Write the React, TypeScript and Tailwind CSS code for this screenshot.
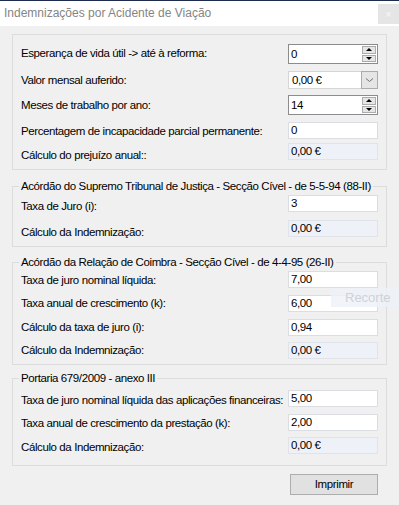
import React from "react";

type Kind = "spin" | "combo" | "text" | "ro";

const Field = ({ kind, value }: { kind: Kind; value: string }) => {
  if (kind === "spin") {
    return (
      <div className="w-[90px] h-[20px] flex border border-[#8c8c8c] bg-white">
        <div className="flex-1 pl-[2px] leading-[18px]">{value}</div>
        <div className="w-[15px] flex flex-col gap-px py-px pr-px">
          <div className="flex-1 bg-[#e6e6e6] border border-[#acacac] flex items-center justify-center">
            <div className="w-0 h-0 border-l-[3px] border-r-[3px] border-b-[3px] border-l-transparent border-r-transparent border-b-black" />
          </div>
          <div className="flex-1 bg-[#e6e6e6] border border-[#acacac] flex items-center justify-center">
            <div className="w-0 h-0 border-l-[3px] border-r-[3px] border-t-[3px] border-l-transparent border-r-transparent border-t-black" />
          </div>
        </div>
      </div>
    );
  }
  if (kind === "combo") {
    return (
      <div className="w-[90px] h-[18px] flex">
        <div className="flex-1 pl-[3px] leading-[16px] bg-white border border-[#d5d5d5] border-r-0">{value}</div>
        <div className="w-[17px] bg-[#e5e5e5] border border-[#acacac] flex items-center justify-center">
          <svg width="9" height="6" viewBox="0 0 9 6">
            <path d="M1 1.5 L4.5 4.5 L8 1.5" fill="none" stroke="#707070" strokeWidth="1" />
          </svg>
        </div>
      </div>
    );
  }
  const cls =
    kind === "ro"
      ? "bg-[#eef2f8] border-[#e0e4ea]"
      : "bg-white border-[#dadde2]";
  return (
    <div className={`w-[90px] h-[17px] border ${cls} pl-[2px] leading-[14px]`}>
      {value}
    </div>
  );
};

const Row = ({
  label,
  kind,
  value,
  mt,
  pt,
}: {
  label: string;
  kind: Kind;
  value: string;
  mt: string;
  pt: string;
}) => (
  <div className={`flex items-start ${mt}`}>
    <span className={`flex-1 whitespace-nowrap leading-[14px] ${pt}`}>{label}</span>
    <Field kind={kind} value={value} />
  </div>
);

const Group = ({
  title,
  className,
  children,
}: {
  title: string;
  className: string;
  children: React.ReactNode;
}) => (
  <fieldset className={`border border-[#dcdcdc] px-[8px] ${className}`}>
    <legend className="-ml-[2px] px-[2px] leading-[14px] whitespace-nowrap">{title}</legend>
    {children}
  </fieldset>
);

const App = () => {
  return (
    <div className="relative w-[399px] h-[505px] overflow-hidden bg-[#f0f0f0] text-[11.5px] tracking-[-0.4px] text-black font-['Liberation_Sans',Arial,sans-serif]">
      <div className="h-[26px] bg-white border-t border-[#1d2c4c] flex items-start justify-between">
        <span className="pl-[4px] pt-[4px] text-[12px] tracking-normal leading-[16px] text-[#858585]">
          Indemnizações por Acidente de Viação
        </span>
        <div className="mt-[3px] w-[21px] h-[20px] bg-[#e5e5e5] flex items-center justify-center text-[#f7f7f7] text-[11px] tracking-normal">
          ×
        </div>
      </div>

      <div className="px-[12px] pt-[8px] flex flex-col">
        <div className="border border-[#dcdcdc] px-[8px] pt-[9px] pb-[7px]">
          <Row label="Esperança de vida útil -> até à reforma:" kind="spin" value="0" mt="" pt="pt-[2px]" />
          <Row label="Valor mensal auferido:" kind="combo" value="0,00 €" mt="mt-[7px]" pt="pt-[2px]" />
          <Row label="Meses de trabalho por ano:" kind="spin" value="14" mt="mt-[6px]" pt="pt-[3px]" />
          <Row label="Percentagem de incapacidade parcial permanente:" kind="text" value="0" mt="mt-[7px]" pt="pt-[2px]" />
          <Row label="Cálculo do prejuízo anual::" kind="ro" value="0,00 €" mt="mt-[4px]" pt="pt-[5px]" />
        </div>

        <Group
          title="Acórdão do Supremo Tribunal de Justiça - Secção Cível - de 5-5-94 (88-II)"
          className="mt-[9px] pt-[2px] pb-[7px]"
        >
          <Row label="Taxa de Juro (i):" kind="text" value="3" mt="" pt="pt-[4px]" />
          <Row label="Cálculo da Indemnização:" kind="ro" value="0,00 €" mt="mt-[7px]" pt="pt-[5px]" />
        </Group>

        <Group
          title="Acórdão da Relação de Coimbra - Secção Cível - de 4-4-95 (26-II)"
          className="mt-[8px] pt-[2px] pb-[5px]"
        >
          <Row label="Taxa de juro nominal líquida:" kind="text" value="7,00" mt="" pt="pt-[2px]" />
          <Row label="Taxa anual de crescimento (k):" kind="text" value="6,00" mt="mt-[7px]" pt="pt-[1px]" />
          <Row label="Cálculo da taxa de juro (i):" kind="text" value="0,94" mt="mt-[7px]" pt="pt-[1px]" />
          <Row label="Cálculo da Indemnização:" kind="ro" value="0,00 €" mt="mt-[6px]" pt="pt-[1px]" />
        </Group>

        <Group title="Portaria 679/2009 - anexo III" className="mt-[6px] pt-[5px] pb-[11px]">
          <Row
            label="Taxa de juro nominal líquida das aplicações financeiras:"
            kind="text"
            value="5,00"
            mt=""
            pt="pt-[3px]"
          />
          <Row label="Taxa anual de crescimento da prestação (k):" kind="text" value="2,00" mt="mt-[7px]" pt="pt-[2px]" />
          <Row label="Cálculo da Indemnização:" kind="ro" value="0,00 €" mt="mt-[6px]" pt="pt-[3px]" />
        </Group>

        <div className="flex justify-end mt-[8px] pr-[9px]">
          <button className="w-[88px] h-[21px] bg-[#e1e1e1] border border-[#adadad] leading-[19px] text-center">
            Imprimir
          </button>
        </div>
      </div>

      <div className="absolute left-[331px] top-[288px] w-[68px] h-[19px] bg-[#eef1f6]/80 text-[#cdd2d9] text-[13px] tracking-normal leading-[19px] pl-[14px]">
        Recorte
      </div>
    </div>
  );
};

export default App;
